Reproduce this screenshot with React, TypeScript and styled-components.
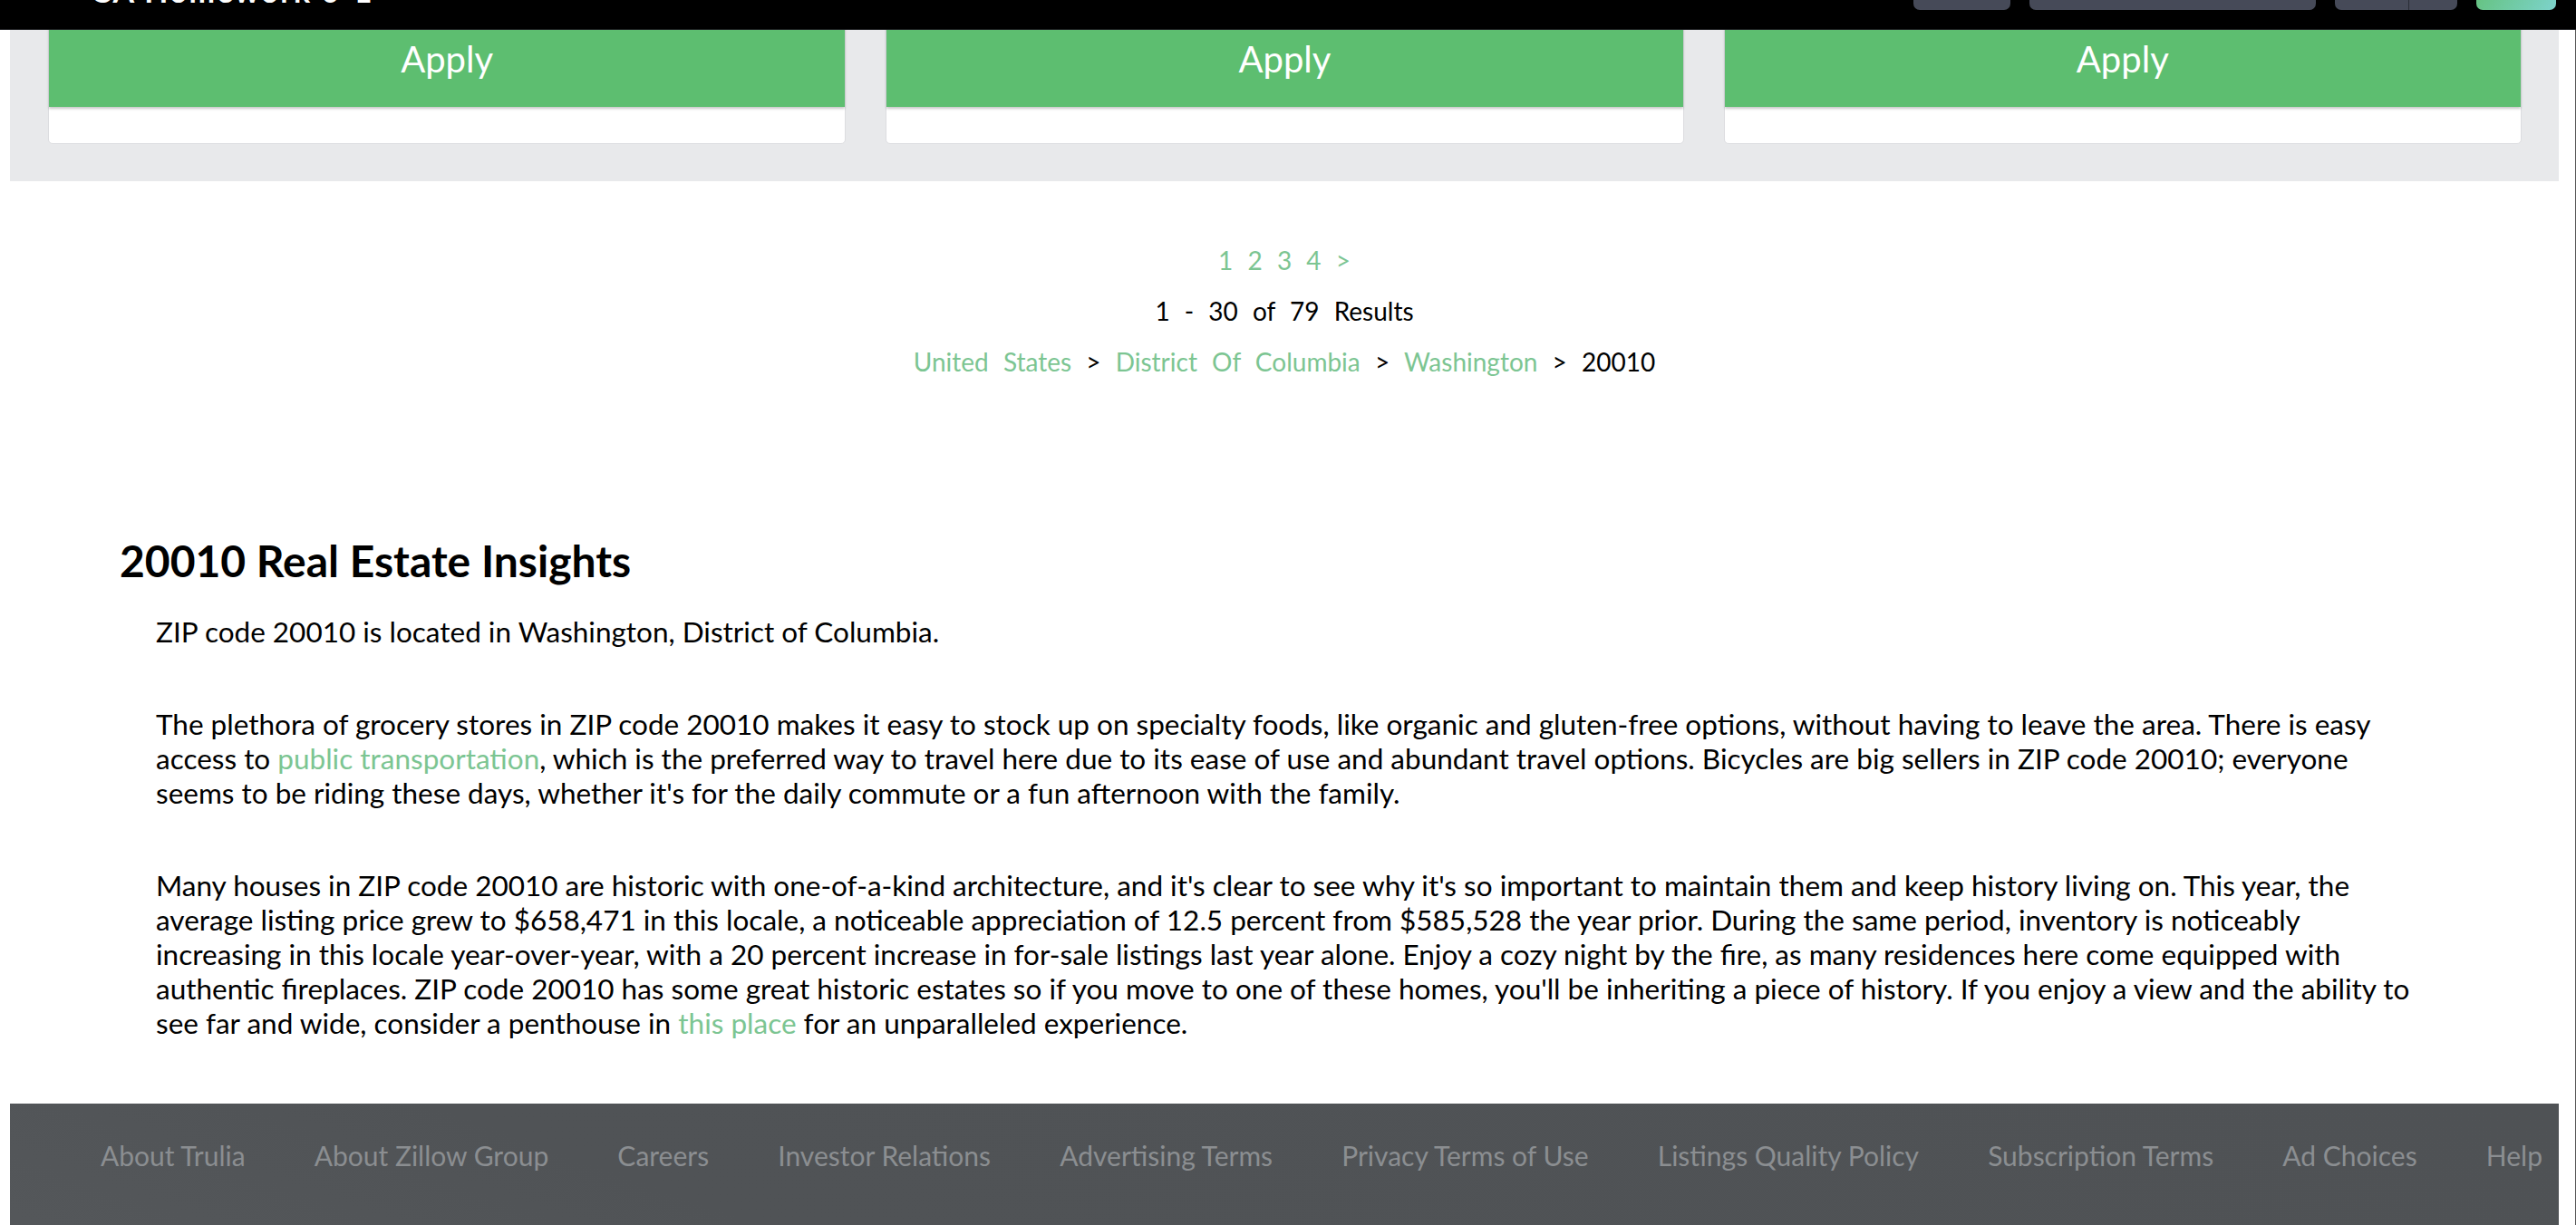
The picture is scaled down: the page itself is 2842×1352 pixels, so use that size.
import React from "react";
import styled, { createGlobalStyle } from "styled-components";

interface CrumbTypes {
  label: string;
  link: boolean;
}

const GREEN_LINK = "#7cc592";

const GlobalStyle = createGlobalStyle`
  html, body {
    margin: 0;
    padding: 0;
    background: #fff;
  }
  body {
    font-family: Lato, "Open Sans", "Liberation Sans", sans-serif;
    color: #000;
  }
  * {
    box-sizing: border-box;
  }
`;

const PageStyled = styled.div`
  width: 100%;
  min-height: 100vh;
  padding: 0 18px 0 11px;
  border-right: 1px solid #555;
`;

/* fixed top bar, sits over the scrolled page */
const TopBarStyled = styled.header`
  position: fixed;
  top: 0;
  left: 0;
  right: 0;
  height: 33px;
  background: #000;
  border-bottom: 1px solid #1e1f22;
  display: flex;
  align-items: flex-start;
  padding: 0 22px 0 100px;
  overflow: hidden;
  z-index: 10;
`;

const TopTitleStyled = styled.div`
  color: #fff;
  font-size: 34px;
  font-weight: 700;
  line-height: 34px;
  margin-top: -27px;
  letter-spacing: 2px;
`;

const TopActionsStyled = styled.div`
  margin-left: auto;
  display: flex;
  align-items: flex-start;
  gap: 21px;
`;

const TopActionStyled = styled.div<{ w: number; accent?: boolean }>`
  width: ${(p) => p.w}px;
  height: 11px;
  border-radius: 0 0 7px 7px;
  background: ${(p) =>
    p.accent ? "linear-gradient(120deg, #66c383 0%, #7dd3cc 100%)" : "#464a58"};
  display: flex;
`;

const TopSplitStyled = styled.div`
  width: 82px;
  border-right: 1px solid #2a2d36;
`;

const FilterPanelStyled = styled.section`
  background: #e8e9eb;
  padding: 13px 41px 41px 42px;
  display: grid;
  grid-template-columns: repeat(3, 1fr);
  gap: 44px;
`;

const CardStyled = styled.div`
  background: #fff;
  border: 1px solid #dcdde0;
  border-radius: 5px;
  padding-bottom: 40px;
`;

const ApplyButtonStyled = styled.button`
  display: block;
  width: 100%;
  height: 104px;
  border: none;
  border-radius: 4px 4px 0 0;
  background: #5dbe70;
  color: #fff;
  font-family: Lato, "Open Sans", sans-serif;
  font-size: 40px;
  font-weight: 400;
  padding-bottom: 4px;
  box-shadow: 0 2px 3px rgba(0, 0, 0, 0.22);
  cursor: pointer;
`;

const ResultsNavStyled = styled.nav`
  padding-top: 59px;
  text-align: center;
  font-size: 28px;
  line-height: 56px;
  word-spacing: 9px;
`;

const NavRowStyled = styled.div``;

const LinkStyled = styled.a`
  color: ${GREEN_LINK};
  text-decoration: none;
  cursor: pointer;
`;

const InsightsStyled = styled.section`
  padding: 164px 158px 70px 121px;
`;

const InsightsTitleStyled = styled.h2`
  margin: 0 0 31px;
  font-size: 48px;
  font-weight: 700;
  line-height: 56px;
`;

const InsightsTextStyled = styled.p`
  margin: 0 0 64px 40px;
  font-size: 31.5px;
  line-height: 38px;
  &:last-child {
    margin-bottom: 0;
  }
`;

const FooterStyled = styled.footer`
  background: linear-gradient(20deg, #55585b 0%, #505356 30%, #4f5255 100%);
  padding: 37px 18px 120px 100px;
  display: flex;
  justify-content: space-between;
`;

const FooterLinkStyled = styled.a`
  color: #8b8e91;
  font-size: 30px;
  line-height: 40px;
  text-decoration: none;
  cursor: pointer;
`;

const crumbs: CrumbTypes[] = [
  { label: "United States", link: true },
  { label: "District Of Columbia", link: true },
  { label: "Washington", link: true },
  { label: "20010", link: false },
];

const footerLinks = [
  "About Trulia",
  "About Zillow Group",
  "Careers",
  "Investor Relations",
  "Advertising Terms",
  "Privacy Terms of Use",
  "Listings Quality Policy",
  "Subscription Terms",
  "Ad Choices",
  "Help",
];

const App: React.FC = () => {
  return (
    <>
      <GlobalStyle />
      <TopBarStyled>
        <TopTitleStyled>CA Homework 0-1</TopTitleStyled>
        <TopActionsStyled>
          <TopActionStyled w={107} />
          <TopActionStyled w={316} />
          <TopActionStyled w={135}>
            <TopSplitStyled />
          </TopActionStyled>
          <TopActionStyled w={88} accent />
        </TopActionsStyled>
      </TopBarStyled>
      <PageStyled>
        <FilterPanelStyled>
          {[0, 1, 2].map((i) => (
            <CardStyled key={i}>
              <ApplyButtonStyled>Apply</ApplyButtonStyled>
            </CardStyled>
          ))}
        </FilterPanelStyled>

        <ResultsNavStyled>
          <NavRowStyled>
            {["1", "2", "3", "4", ">"].map((p) => (
              <React.Fragment key={p}>
                <LinkStyled>{p}</LinkStyled>{" "}
              </React.Fragment>
            ))}
          </NavRowStyled>
          <NavRowStyled>1 - 30 of 79 Results</NavRowStyled>
          <NavRowStyled>
            {crumbs.map((c, index) => (
              <React.Fragment key={c.label}>
                {c.link ? <LinkStyled>{c.label}</LinkStyled> : c.label}
                {index < crumbs.length - 1 ? " > " : ""}
              </React.Fragment>
            ))}
          </NavRowStyled>
        </ResultsNavStyled>

        <InsightsStyled>
          <InsightsTitleStyled>20010 Real Estate Insights</InsightsTitleStyled>
          <InsightsTextStyled>
            ZIP code 20010 is located in Washington, District of Columbia.
          </InsightsTextStyled>
          <InsightsTextStyled>
            The plethora of grocery stores in ZIP code 20010 makes it easy to
            stock up on specialty foods, like organic and gluten-free options,
            without having to leave the area. There is easy access to{" "}
            <LinkStyled>public transportation</LinkStyled>, which is the
            preferred way to travel here due to its ease of use and abundant
            travel options. Bicycles are big sellers in ZIP code 20010; everyone
            seems to be riding these days, whether it's for the daily commute or
            a fun afternoon with the family.
          </InsightsTextStyled>
          <InsightsTextStyled>
            Many houses in ZIP code 20010 are historic with one-of-a-kind
            architecture, and it's clear to see why it's so important to
            maintain them and keep history living on. This year, the average
            listing price grew to $658,471 in this locale, a noticeable
            appreciation of 12.5 percent from $585,528 the year prior. During
            the same period, inventory is noticeably increasing in this locale
            year-over-year, with a 20 percent increase in for-sale listings last
            year alone. Enjoy a cozy night by the fire, as many residences here
            come equipped with authentic fireplaces. ZIP code 20010 has some
            great historic estates so if you move to one of these homes, you'll
            be inheriting a piece of history. If you enjoy a view and the
            ability to see far and wide, consider a penthouse in{" "}
            <LinkStyled>this place</LinkStyled> for an unparalleled experience.
          </InsightsTextStyled>
        </InsightsStyled>

        <FooterStyled>
          {footerLinks.map((label) => (
            <FooterLinkStyled key={label}>{label}</FooterLinkStyled>
          ))}
        </FooterStyled>
      </PageStyled>
    </>
  );
};

export default App;
